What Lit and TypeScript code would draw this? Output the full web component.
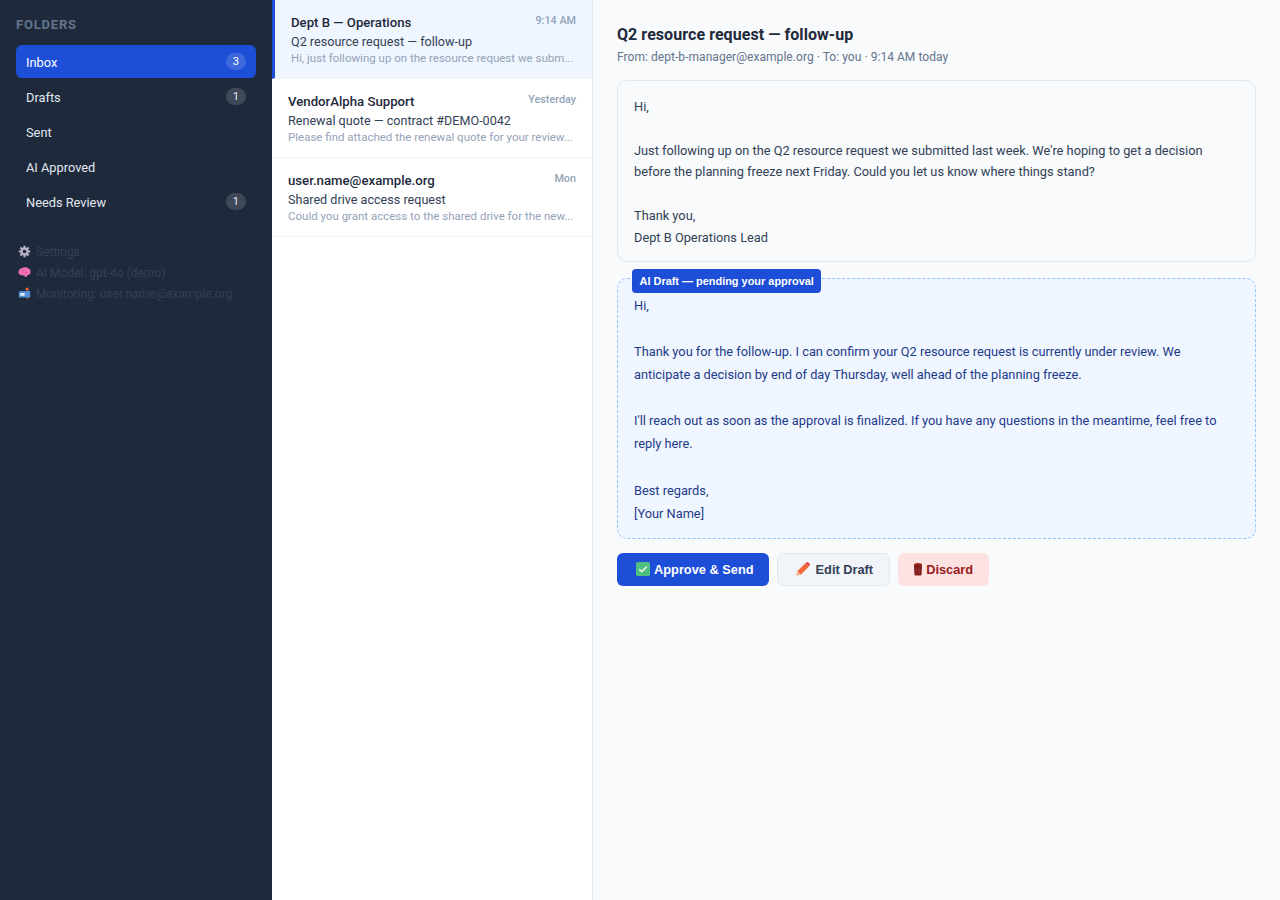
import { LitElement, html, css, svg } from "lit";
import { customElement } from "lit/decorators.js";

const folders = [
  { name: "Inbox", count: 3, active: true },
  { name: "Drafts", count: 1 },
  { name: "Sent" },
  { name: "AI Approved" },
  { name: "Needs Review", count: 1 },
];
const mails = [
  { from: "Dept B — Operations", time: "9:14 AM", subject: "Q2 resource request — follow-up", preview: "Hi, just following up on the resource request we subm...", active: true },
  { from: "VendorAlpha Support", time: "Yesterday", subject: "Renewal quote — contract #DEMO-0042", preview: "Please find attached the renewal quote for your review..." },
  { from: "user.name@example.org", time: "Mon", subject: "Shared drive access request", preview: "Could you grant access to the shared drive for the new..." },
];

const gear = svg`<svg class="ic" viewBox="0 0 16 16"><g fill="#b9b3c6"><circle cx="8" cy="8" r="5"/><g stroke="#b9b3c6" stroke-width="2.6"><path d="M8 1v14M1 8h14M3 3l10 10M13 3L3 13"/></g></g><circle cx="8" cy="8" r="2.2" fill="#1e293b"/></svg>`;
const brain = svg`<svg class="ic" viewBox="0 0 16 16"><path fill="#ee6fb4" d="M.5 7.500C.5 4.500 3 2.500 6 2 9 1.200 12.300 2 14 3.800c1.400 1.400 1.900 3.200 1.400 4.800-.5 1.700-1.900 2.500-3.700 2.500-.4 1.800-1.400 2.800-2.600 2.500-.8-.2-1.100-1-1.200-1.800C4.500 12 .5 11.200.5 7.500z"/><path fill="none" stroke="#c94c94" stroke-width=".7" d="M4 6.500c1.500-1.300 3-1 4 0M8.500 8.500c1.500-1 3-.7 4 .2"/></svg>`;
const mailbox = svg`<svg class="ic" viewBox="0 0 16 16"><rect x="11" y="1" width="1.700" height="14" fill="#a0522d"/><rect x="9.500" y="1" width="3.200" height="3" fill="#ef6b3b"/><path fill="#4f8fd6" d="M1 7.500A2.500 2.500 0 0 1 3.500 5H15v8H1z"/><rect x="2.800" y="7.400" width="5.400" height="3.400" fill="#e8eef5"/></svg>`;
const check = svg`<svg class="bi" viewBox="0 0 14 14"><rect width="14" height="14" rx="1.500" fill="#4fbf7f"/><path d="M3.200 7.300l2.600 2.500 5-5.300" fill="none" stroke="#f0fbf4" stroke-width="1.500"/></svg>`;
const pencil = svg`<svg class="bi" viewBox="0 0 14 14"><path fill="#f0693a" d="M9.300 1.200l3.500 3.500-8 8L1.300 9.200z"/><path fill="#f7b58f" d="M1.300 9.200l3.500 3.500L0 14z"/><path fill="#e5484d" d="M10.400.4a1.300 1.300 0 0 1 1.800 0l1.400 1.400a1.300 1.300 0 0 1 0 1.800l-1 1-3.200-3.200z"/></svg>`;
const bin = svg`<svg class="bt" viewBox="0 0 10 14"><ellipse cx="5" cy="2.600" rx="4" ry="1.700" fill="#a52020"/><path fill="#7f1d1d" d="M1 3h8l-.4 9.300a1.300 1.300 0 0 1-1.300 1.200H2.700a1.300 1.300 0 0 1-1.300-1.200z"/><path d="M3.600 5.500v6M6.400 5.500v6" stroke="#a83f3f" stroke-width=".7"/></svg>`;

@customElement("app-root")
export class AppRoot extends LitElement {
  static styles = css`
    :host { display: grid; grid-template-columns: 272px 321px 1fr; height: 900px; overflow: hidden; font-family: Roboto, "Noto Sans", sans-serif; background: #f8fafc; }
    .side { background: #1e293b; padding: 16px; box-sizing: border-box; color: #e2e8f0; }
    .side h2 { margin: 0 0 11px; font-size: 13px; line-height: 18px; font-weight: 700; letter-spacing: 0.8px; color: #64748b; text-transform: uppercase; }
    .folder { display: flex; align-items: center; justify-content: space-between; height: 33px; box-sizing: border-box; padding: 1px 10px 0; margin-bottom: 2px; border-radius: 6px; font-size: 12.8px; color: #e2e8f0; }
    .folder.active { background: #1d4ed8; color: #fff; }
    .badge { min-width: 20px; height: 17px; margin-top: -1px; box-sizing: border-box; border-radius: 9px; background: rgba(255,255,255,.15); font-size: 11.2px; line-height: 17px; text-align: center; }
    .meta { margin: 23px 2px 0; font-size: 12px; color: #334155; }
    .meta div { display: flex; align-items: center; gap: 5px; height: 21px; white-space: nowrap; }
    .ic { width: 13px; height: 13px; flex: none; }
    .list { background: #fff; border-right: 1px solid #e2e8f0; }
    .mail { height: 79px; box-sizing: border-box; padding: 13px 16px 11px; border-bottom: 1px solid #f1f5f9; }
    .mail.active { background: #eff6ff; border-left: 3px solid #1d4ed8; }
    .row { display: flex; justify-content: space-between; align-items: flex-start; }
    .from { font-size: 13.2px; font-weight: 500; color: #1e293b; line-height: 20px; }
    .time { font-size: 10.8px; color: #94a3b8; font-weight: 500; line-height: 16px; }
    .subj { font-size: 12.6px; color: #334155; line-height: 17px; }
    .prev { font-size: 11.5px; color: #94a3b8; line-height: 17px; white-space: nowrap; overflow: hidden; }
    .detail { padding: 25px 24px 24px; min-width: 0; }
    h1 { margin: 0; font-size: 16px; line-height: 20px; font-weight: 700; letter-spacing: .06px; color: #1e293b; }
    .sub { margin: 3px 0 14px; font-size: 12px; line-height: 18px; letter-spacing: .05px; color: #64748b; }
    .card { background: #f8fafc; border: 1px solid #e2e8f0; border-radius: 10px; padding: 15px 16px 13px; font-size: 12.8px; line-height: 1.7; color: #334155; white-space: pre-line; margin-bottom: 16px; }
    .draft { position: relative; background: #eff6ff; border: 1px dashed #93c5fd; border-radius: 10px; padding: 15px 16px 13px; font-size: 12.8px; line-height: 1.8; color: #1e3a8a; white-space: pre-line; }
    .tag { position: absolute; left: 14px; top: -10px; background: #1d4ed8; color: #fff; font-family: "Liberation Sans", Arial, sans-serif; font-size: 10.95px; font-weight: 700; line-height: 16px; padding: 4px 7.5px; border-radius: 4px; white-space: nowrap; }
    .actions { display: flex; gap: 8px; margin-top: 14px; }
    button { display: flex; align-items: center; height: 33px; border-radius: 6px; border: 0; padding: 1px 16px 0; font-family: "Liberation Sans", Arial, sans-serif; font-size: 12.8px; font-weight: 700; }
    .bi { width: 14px; height: 14px; margin: -1px 4px 0 3px; }
    .bt { width: 10px; height: 14px; margin: -1px 3px 0 -1px; }
    .ok { background: #1d4ed8; color: #fff; padding-right: 15px; }
    .edit { background: #f1f5f9; color: #334155; border: 1px solid #e2e8f0; padding-left: 18px; padding-right: 16px; }
    .edit .bi { margin-left: 0; margin-right: 6px; }
    .no { background: #fee2e2; color: #991b1b; }
  `;

  render() {
    return html`
      <aside class="side">
        <h2>Folders</h2>
        ${folders.map(f => html`<div class="folder ${f.active ? "active" : ""}"><span>${f.name}</span>${f.count ? html`<span class="badge">${f.count}</span>` : ""}</div>`)}
        <div class="meta">
          <div>${gear}<span>Settings</span></div>
          <div>${brain}<span>AI Model: gpt-4o (demo)</span></div>
          <div>${mailbox}<span>Monitoring: user.name@example.org</span></div>
        </div>
      </aside>
      <section class="list">
        ${mails.map(m => html`<div class="mail ${m.active ? "active" : ""}">
          <div class="row"><span class="from">${m.from}</span><span class="time">${m.time}</span></div>
          <div class="subj">${m.subject}</div>
          <div class="prev">${m.preview}</div>
        </div>`)}
      </section>
      <main class="detail">
        <h1>Q2 resource request — follow-up</h1>
        <div class="sub">From: dept-b-manager@example.org · To: you · 9:14 AM today</div>
        <div class="card">Hi,

Just following up on the Q2 resource request we submitted last week. We're hoping to get a decision before the planning freeze next Friday. Could you let us know where things stand?

Thank you,
Dept B Operations Lead</div>
        <div class="draft"><span class="tag">AI Draft — pending your approval</span>Hi,

Thank you for the follow-up. I can confirm your Q2 resource request is currently under review. We anticipate a decision by end of day Thursday, well ahead of the planning freeze.

I'll reach out as soon as the approval is finalized. If you have any questions in the meantime, feel free to reply here.

Best regards,
[Your Name]</div>
        <div class="actions">
          <button class="ok">${check}Approve &amp; Send</button>
          <button class="edit">${pencil}Edit Draft</button>
          <button class="no">${bin}Discard</button>
        </div>
      </main>
    `;
  }
}
